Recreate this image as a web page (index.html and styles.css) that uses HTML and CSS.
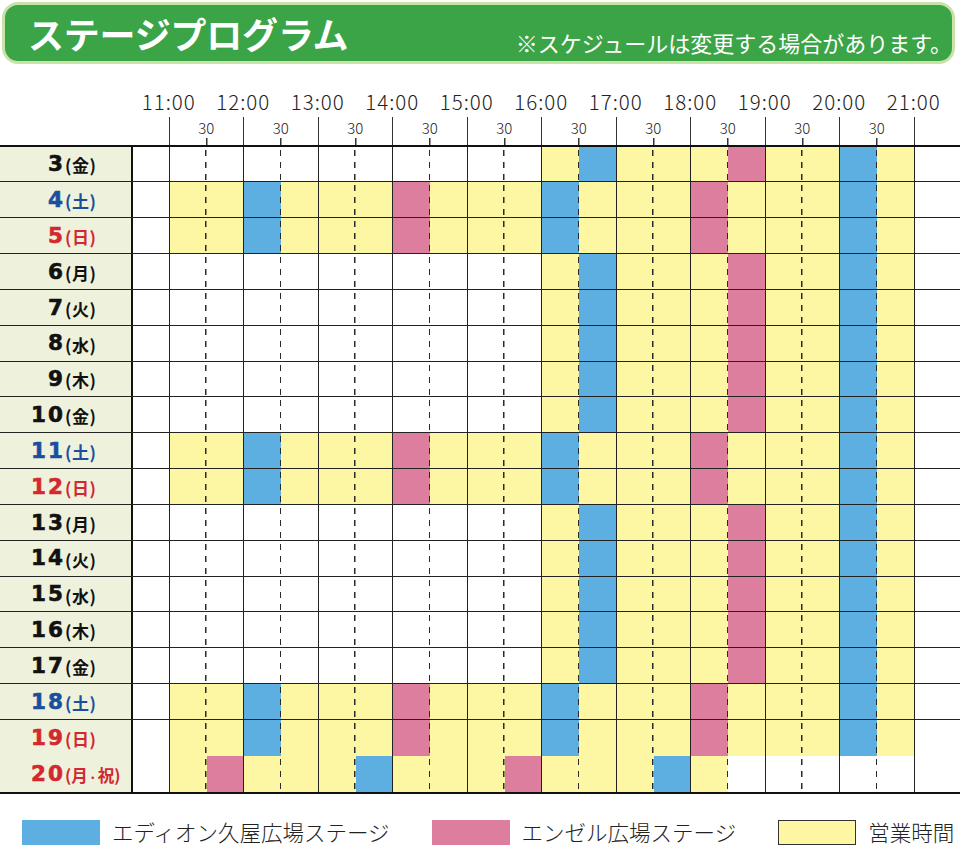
FILE: index.html
```html
<!DOCTYPE html>
<html lang="ja">
<head>
<meta charset="utf-8">
<title>ステージプログラム</title>
<link rel="stylesheet" href="styles.css">
</head>
<body>
<header class="banner">
  <h1 class="title">ステージプログラム</h1>
  <p class="note">※スケジュールは変更する場合があります。</p>
</header>

<div class="hours">
  <span>11:00</span><span>12:00</span><span>13:00</span><span>14:00</span><span>15:00</span><span>16:00</span><span>17:00</span><span>18:00</span><span>19:00</span><span>20:00</span><span>21:00</span>
</div>
<div class="halves">
  <span class="first"></span><span>30</span><span>30</span><span>30</span><span>30</span><span>30</span><span>30</span><span>30</span><span>30</span><span>30</span><span>30</span>
</div>

<div class="grid">
  <!-- 3 -->
  <div class="row">
    <div class="lab"><span class="n">3</span><span class="d">(金)</span></div><div class="pre"></div>
    <div class="s"></div><div class="s"></div><div class="s"></div><div class="s"></div><div class="s"></div><div class="s"></div><div class="s"></div><div class="s"></div><div class="s"></div><div class="s"></div>
    <div class="s y"></div><div class="s b"></div><div class="s y"></div><div class="s y"></div><div class="s y"></div><div class="s p"></div><div class="s y"></div><div class="s y"></div><div class="s b"></div><div class="s y"></div>
    <div class="tail"></div>
  </div>
  <!-- 4 -->
  <div class="row">
    <div class="lab sat"><span class="n">4</span><span class="d">(土)</span></div><div class="pre"></div>
    <div class="s y"></div><div class="s y"></div><div class="s b"></div><div class="s y"></div><div class="s y"></div><div class="s y"></div><div class="s p"></div><div class="s y"></div><div class="s y"></div><div class="s y"></div>
    <div class="s b"></div><div class="s y"></div><div class="s y"></div><div class="s y"></div><div class="s p"></div><div class="s y"></div><div class="s y"></div><div class="s y"></div><div class="s b"></div><div class="s y"></div>
    <div class="tail"></div>
  </div>
  <!-- 5 -->
  <div class="row">
    <div class="lab sun"><span class="n">5</span><span class="d">(日)</span></div><div class="pre"></div>
    <div class="s y"></div><div class="s y"></div><div class="s b"></div><div class="s y"></div><div class="s y"></div><div class="s y"></div><div class="s p"></div><div class="s y"></div><div class="s y"></div><div class="s y"></div>
    <div class="s b"></div><div class="s y"></div><div class="s y"></div><div class="s y"></div><div class="s p"></div><div class="s y"></div><div class="s y"></div><div class="s y"></div><div class="s b"></div><div class="s y"></div>
    <div class="tail"></div>
  </div>
  <!-- 6 -->
  <div class="row">
    <div class="lab"><span class="n">6</span><span class="d">(月)</span></div><div class="pre"></div>
    <div class="s"></div><div class="s"></div><div class="s"></div><div class="s"></div><div class="s"></div><div class="s"></div><div class="s"></div><div class="s"></div><div class="s"></div><div class="s"></div>
    <div class="s y"></div><div class="s b"></div><div class="s y"></div><div class="s y"></div><div class="s y"></div><div class="s p"></div><div class="s y"></div><div class="s y"></div><div class="s b"></div><div class="s y"></div>
    <div class="tail"></div>
  </div>
  <!-- 7 -->
  <div class="row">
    <div class="lab"><span class="n">7</span><span class="d">(火)</span></div><div class="pre"></div>
    <div class="s"></div><div class="s"></div><div class="s"></div><div class="s"></div><div class="s"></div><div class="s"></div><div class="s"></div><div class="s"></div><div class="s"></div><div class="s"></div>
    <div class="s y"></div><div class="s b"></div><div class="s y"></div><div class="s y"></div><div class="s y"></div><div class="s p"></div><div class="s y"></div><div class="s y"></div><div class="s b"></div><div class="s y"></div>
    <div class="tail"></div>
  </div>
  <!-- 8 -->
  <div class="row">
    <div class="lab"><span class="n">8</span><span class="d">(水)</span></div><div class="pre"></div>
    <div class="s"></div><div class="s"></div><div class="s"></div><div class="s"></div><div class="s"></div><div class="s"></div><div class="s"></div><div class="s"></div><div class="s"></div><div class="s"></div>
    <div class="s y"></div><div class="s b"></div><div class="s y"></div><div class="s y"></div><div class="s y"></div><div class="s p"></div><div class="s y"></div><div class="s y"></div><div class="s b"></div><div class="s y"></div>
    <div class="tail"></div>
  </div>
  <!-- 9 -->
  <div class="row">
    <div class="lab"><span class="n">9</span><span class="d">(木)</span></div><div class="pre"></div>
    <div class="s"></div><div class="s"></div><div class="s"></div><div class="s"></div><div class="s"></div><div class="s"></div><div class="s"></div><div class="s"></div><div class="s"></div><div class="s"></div>
    <div class="s y"></div><div class="s b"></div><div class="s y"></div><div class="s y"></div><div class="s y"></div><div class="s p"></div><div class="s y"></div><div class="s y"></div><div class="s b"></div><div class="s y"></div>
    <div class="tail"></div>
  </div>
  <!-- 10 -->
  <div class="row">
    <div class="lab"><span class="n">10</span><span class="d">(金)</span></div><div class="pre"></div>
    <div class="s"></div><div class="s"></div><div class="s"></div><div class="s"></div><div class="s"></div><div class="s"></div><div class="s"></div><div class="s"></div><div class="s"></div><div class="s"></div>
    <div class="s y"></div><div class="s b"></div><div class="s y"></div><div class="s y"></div><div class="s y"></div><div class="s p"></div><div class="s y"></div><div class="s y"></div><div class="s b"></div><div class="s y"></div>
    <div class="tail"></div>
  </div>
  <!-- 11 -->
  <div class="row">
    <div class="lab sat"><span class="n">11</span><span class="d">(土)</span></div><div class="pre"></div>
    <div class="s y"></div><div class="s y"></div><div class="s b"></div><div class="s y"></div><div class="s y"></div><div class="s y"></div><div class="s p"></div><div class="s y"></div><div class="s y"></div><div class="s y"></div>
    <div class="s b"></div><div class="s y"></div><div class="s y"></div><div class="s y"></div><div class="s p"></div><div class="s y"></div><div class="s y"></div><div class="s y"></div><div class="s b"></div><div class="s y"></div>
    <div class="tail"></div>
  </div>
  <!-- 12 -->
  <div class="row">
    <div class="lab sun"><span class="n">12</span><span class="d">(日)</span></div><div class="pre"></div>
    <div class="s y"></div><div class="s y"></div><div class="s b"></div><div class="s y"></div><div class="s y"></div><div class="s y"></div><div class="s p"></div><div class="s y"></div><div class="s y"></div><div class="s y"></div>
    <div class="s b"></div><div class="s y"></div><div class="s y"></div><div class="s y"></div><div class="s p"></div><div class="s y"></div><div class="s y"></div><div class="s y"></div><div class="s b"></div><div class="s y"></div>
    <div class="tail"></div>
  </div>
  <!-- 13 -->
  <div class="row">
    <div class="lab"><span class="n">13</span><span class="d">(月)</span></div><div class="pre"></div>
    <div class="s"></div><div class="s"></div><div class="s"></div><div class="s"></div><div class="s"></div><div class="s"></div><div class="s"></div><div class="s"></div><div class="s"></div><div class="s"></div>
    <div class="s y"></div><div class="s b"></div><div class="s y"></div><div class="s y"></div><div class="s y"></div><div class="s p"></div><div class="s y"></div><div class="s y"></div><div class="s b"></div><div class="s y"></div>
    <div class="tail"></div>
  </div>
  <!-- 14 -->
  <div class="row">
    <div class="lab"><span class="n">14</span><span class="d">(火)</span></div><div class="pre"></div>
    <div class="s"></div><div class="s"></div><div class="s"></div><div class="s"></div><div class="s"></div><div class="s"></div><div class="s"></div><div class="s"></div><div class="s"></div><div class="s"></div>
    <div class="s y"></div><div class="s b"></div><div class="s y"></div><div class="s y"></div><div class="s y"></div><div class="s p"></div><div class="s y"></div><div class="s y"></div><div class="s b"></div><div class="s y"></div>
    <div class="tail"></div>
  </div>
  <!-- 15 -->
  <div class="row">
    <div class="lab"><span class="n">15</span><span class="d">(水)</span></div><div class="pre"></div>
    <div class="s"></div><div class="s"></div><div class="s"></div><div class="s"></div><div class="s"></div><div class="s"></div><div class="s"></div><div class="s"></div><div class="s"></div><div class="s"></div>
    <div class="s y"></div><div class="s b"></div><div class="s y"></div><div class="s y"></div><div class="s y"></div><div class="s p"></div><div class="s y"></div><div class="s y"></div><div class="s b"></div><div class="s y"></div>
    <div class="tail"></div>
  </div>
  <!-- 16 -->
  <div class="row">
    <div class="lab"><span class="n">16</span><span class="d">(木)</span></div><div class="pre"></div>
    <div class="s"></div><div class="s"></div><div class="s"></div><div class="s"></div><div class="s"></div><div class="s"></div><div class="s"></div><div class="s"></div><div class="s"></div><div class="s"></div>
    <div class="s y"></div><div class="s b"></div><div class="s y"></div><div class="s y"></div><div class="s y"></div><div class="s p"></div><div class="s y"></div><div class="s y"></div><div class="s b"></div><div class="s y"></div>
    <div class="tail"></div>
  </div>
  <!-- 17 -->
  <div class="row">
    <div class="lab"><span class="n">17</span><span class="d">(金)</span></div><div class="pre"></div>
    <div class="s"></div><div class="s"></div><div class="s"></div><div class="s"></div><div class="s"></div><div class="s"></div><div class="s"></div><div class="s"></div><div class="s"></div><div class="s"></div>
    <div class="s y"></div><div class="s b"></div><div class="s y"></div><div class="s y"></div><div class="s y"></div><div class="s p"></div><div class="s y"></div><div class="s y"></div><div class="s b"></div><div class="s y"></div>
    <div class="tail"></div>
  </div>
  <!-- 18 -->
  <div class="row">
    <div class="lab sat"><span class="n">18</span><span class="d">(土)</span></div><div class="pre"></div>
    <div class="s y"></div><div class="s y"></div><div class="s b"></div><div class="s y"></div><div class="s y"></div><div class="s y"></div><div class="s p"></div><div class="s y"></div><div class="s y"></div><div class="s y"></div>
    <div class="s b"></div><div class="s y"></div><div class="s y"></div><div class="s y"></div><div class="s p"></div><div class="s y"></div><div class="s y"></div><div class="s y"></div><div class="s b"></div><div class="s y"></div>
    <div class="tail"></div>
  </div>
  <!-- 19 -->
  <div class="row open">
    <div class="lab sun"><span class="n">19</span><span class="d">(日)</span></div><div class="pre"></div>
    <div class="s y"></div><div class="s y"></div><div class="s b"></div><div class="s y"></div><div class="s y"></div><div class="s y"></div><div class="s p"></div><div class="s y"></div><div class="s y"></div><div class="s y"></div>
    <div class="s b"></div><div class="s y"></div><div class="s y"></div><div class="s y"></div><div class="s p"></div><div class="s y"></div><div class="s y"></div><div class="s y"></div><div class="s b"></div><div class="s y"></div>
    <div class="tail"></div>
  </div>
  <!-- 20 -->
  <div class="row open">
    <div class="lab sun"><span class="n">20</span><span class="d wide">(月<span class="dot">・</span>祝)</span></div><div class="pre"></div>
    <div class="s y"></div><div class="s p"></div><div class="s y"></div><div class="s y"></div><div class="s y"></div><div class="s b"></div><div class="s y"></div><div class="s y"></div><div class="s y"></div><div class="s p"></div>
    <div class="s y"></div><div class="s y"></div><div class="s y"></div><div class="s b"></div><div class="s y"></div><div class="s"></div><div class="s"></div><div class="s"></div><div class="s"></div><div class="s"></div>
    <div class="tail"></div>
  </div>
</div>

<div class="legend">
  <div class="item"><span class="sw b"></span><span class="lt">エディオン久屋広場ステージ</span></div>
  <div class="item"><span class="sw p"></span><span class="lt">エンゼル広場ステージ</span></div>
  <div class="item"><span class="sw y boxed"></span><span class="lt">営業時間</span></div>
</div>
</body>
</html>
```

FILE: styles.css
```css
* { box-sizing: border-box; }

body {
  margin: 0;
  width: 960px;
  background: #fff;
  color: #222;
  font-family: "Noto Sans CJK JP", "Noto Sans", sans-serif;
}

/* ---------- banner ---------- */
.banner {
  margin: 2px 5px 0 2px;
  height: 62px;
  border: 3px solid #c8e2a8;
  border-radius: 16px;
  background: #3aa447;
  color: #fff;
  display: flex;
  align-items: center;
  justify-content: space-between;
  padding: 0 0 0 23px;
}
.title {
  margin: 0;
  font-size: 36px;
  font-weight: 700;
  line-height: 1;
  letter-spacing: -0.2px;
}
.note {
  margin: 17px 0 0;
  font-size: 22px;
  font-weight: 400;
  line-height: 1;
  white-space: nowrap;
}

/* ---------- time header ---------- */
.hours {
  margin-top: 22px;
  height: 31px;
  padding-left: 131.5px;
  display: flex;
  align-items: center;
}
.hours span {
  width: 74.5px;
  flex: none;
  text-align: center;
  font-size: 20.5px;
  font-weight: 300;
  letter-spacing: 1px;
  color: #222;
  line-height: 1;
}

.halves {
  height: 27.5px;
  padding-left: 95px;
  display: flex;
}
.halves span {
  width: 74.5px;
  flex: none;
  border-right: 1.5px solid #333;
  text-align: center;
  font-size: 15px;
  font-weight: 300;
  line-height: 20px;
  padding-top: 1px;
  color: #222;
  background: linear-gradient(#333, #333) center bottom / 1.5px 7px no-repeat;
}
.halves span.first { background: none; }

/* ---------- schedule grid ---------- */
.grid {
  border-top: 2.5px solid #111;
  border-bottom: 2.5px solid #111;
}
.row {
  display: grid;
  grid-template-columns: 133px 36.5px repeat(20, 37.25px) 1fr;
  height: 35.85px;
  border-bottom: 1.5px solid #222;
}
.row.open { border-bottom: none; }

.lab {
  background: #eef1dc;
  border-right: 2.5px solid #111;
  display: flex;
  align-items: center;
  color: #111;
  white-space: nowrap;
}
.lab.sat { color: #1b4f9e; }
.lab.sun { color: #d2282e; }
.n {
  width: 65px;
  flex: none;
  text-align: right;
  font-family: "DejaVu Sans", "Liberation Sans", sans-serif;
  font-weight: 700;
  font-size: 21.5px;
  letter-spacing: 2px;
  line-height: 1;
  -webkit-text-stroke: 0.6px currentColor;
}
.d {
  flex: none;
  font-family: "Noto Sans CJK JP", sans-serif;
  font-weight: 700;
  font-size: 17px;
  letter-spacing: 0.5px;
  line-height: 1;
  margin-top: 2px;
  white-space: nowrap;
}
.d.wide { letter-spacing: 0; font-size: 16.5px; }
.dot { font-size: 10px; }

.pre { border-right: 1.5px solid #222; }

.s:nth-child(odd) {
  background-image: repeating-linear-gradient(to bottom, transparent 0 3px, #2a2a2a 3px 9px, transparent 9px 12px);
  background-size: 1.5px 100%;
  background-position: right top;
  background-repeat: no-repeat;
}
.s:nth-child(even) { border-right: 1.5px solid #222; }

.y { background-color: #fdf6a3; }
.b { background-color: #5eafe1; }
.p { background-color: #dd7e9e; }

/* ---------- legend ---------- */
.legend {
  margin-top: 26px;
  padding-left: 22px;
  display: flex;
  align-items: center;
}
.item {
  display: flex;
  align-items: center;
  margin-right: 42px;
}
.item:last-child { margin-right: 0; }
.sw {
  width: 78px;
  height: 25px;
  margin-right: 12px;
  flex: none;
}
.sw.boxed { border: 1.5px solid #333; }
.lt {
  font-size: 21.5px;
  font-weight: 300;
  line-height: 1;
  color: #222;
  white-space: nowrap;
}
```
